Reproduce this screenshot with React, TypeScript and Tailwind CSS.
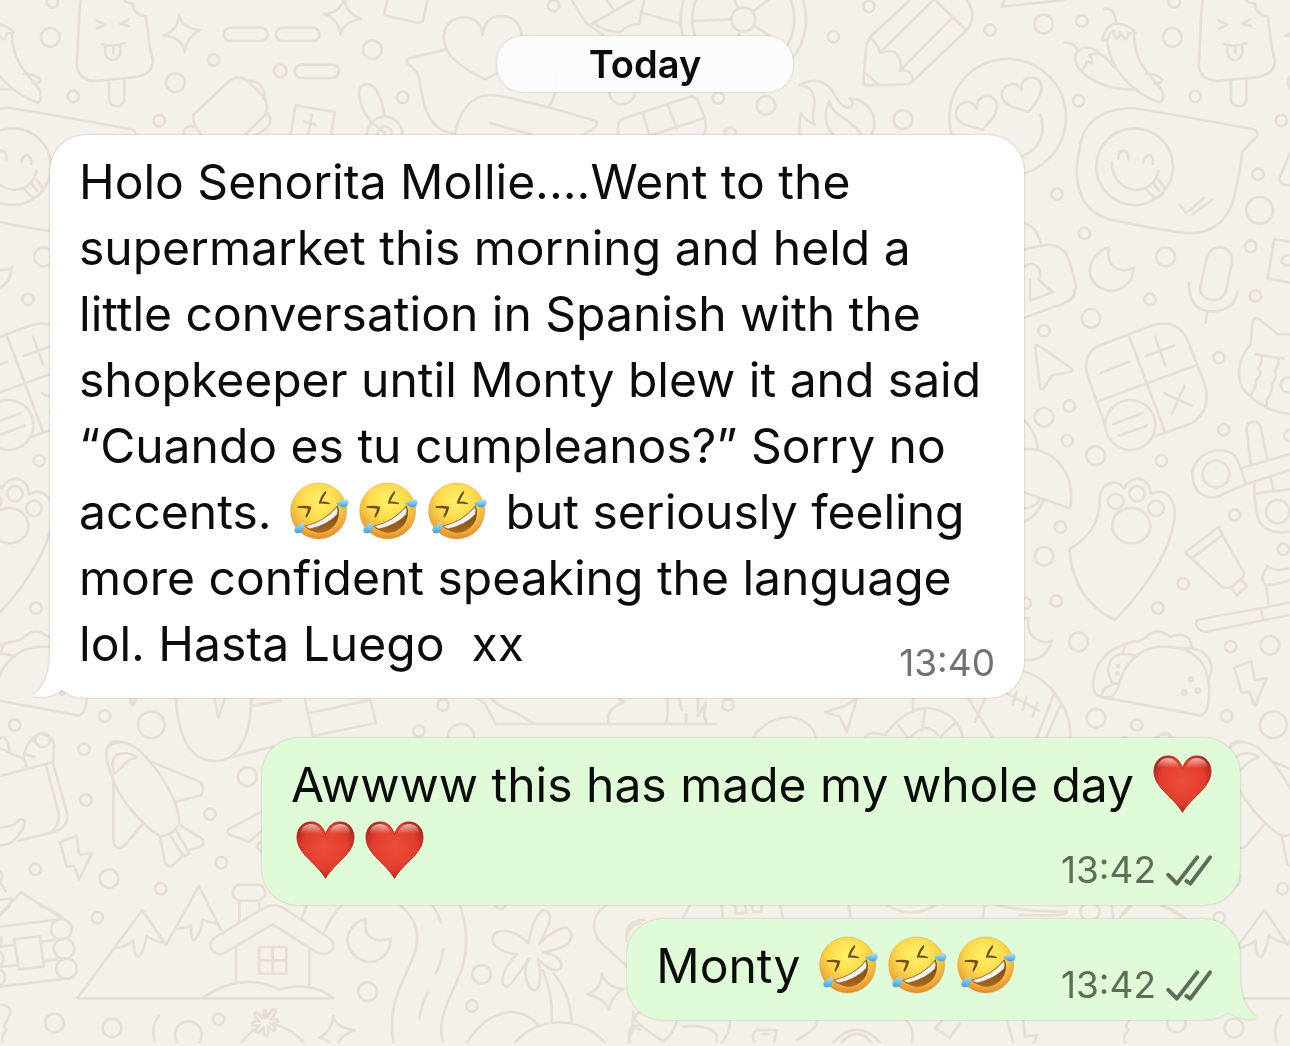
import type { ReactNode } from "react";
import clsx from "clsx";

const FONT = "font-['Inter','Liberation_Sans',sans-serif]";

/** Width after which the wallpaper repeats. */
const TILE = 1122;

type Dot = [number, number, number];

type Doodle = {
  x: number;
  y: number;
  dots: Dot[];
  paths: string[];
};

// Each block is drawn at 3x, from its own origin.
const DOODLES: Doodle[] = [
  {
    x: 0,
    y: 0,
    dots: [
      [157, 6, 17], [151, 112, 28], [220, 289, 17], [478, 362, 17], [526, 248, 28],
      [641, 180, 17], [841, 213, 19], [1117, 149, 28], [1208, 292, 17],
      [1154, 403, 53], [1154, 400, 21],
    ],
    paths: [
      // ice lolly
      "M243 0C235 20 240 50 230 190Q232 240 285 243L400 232Q460 225 458 180C445 130 443 90 437 48Q400 45 398 10Q380 10 372 0",
      "M327 240V300Q330 318 350 319Q370 318 373 300V238M290 62L316 74L290 86M384 58L361 72L387 78",
      "M305 133Q340 142 373 130M316 140V160Q320 180 339 180Q358 178 361 158V138M340 140V158",
      // sparkles and pills
      "M537 45Q545 85 600 90Q560 110 554 155Q545 110 490 107Q535 90 537 45Z",
      "M1032 -5Q1038 40 1084 57Q1030 65 1021 103Q1015 55 972 42Q1020 40 1032 -5Z",
      "M691 83H783a20 20 0 0 1 0 40H691a20 20 0 0 1 0 -40ZM847 83H939a20 20 0 0 1 0 40H847a20 20 0 0 1 0 -40ZM904 194H997a20 20 0 0 1 0 40H904a20 20 0 0 1 0 -40Z",
      "M1163 0L1153 35Q1150 45 1162 48L1250 68Q1265 70 1270 60L1282 0",
      // backpack
      "M580 345L685 245Q715 220 745 245L790 290Q810 315 795 345L735 405M580 345Q575 370 605 405M745 243C780 240 800 270 790 297M550 405C550 380 570 375 582 380M803 340C825 365 800 390 765 405",
      "M872 405L887 316L1004 336L994 405M936 343L925 405M912 365L947 374",
      "M1113 365C1075 320 1065 260 1095 253C1130 245 1150 310 1153 350M1113 365L1155 400",
    ],
  },
  {
    x: 400,
    y: 0,
    dots: [
      [461, 17, 17], [1300, 110, 17], [955, 294, 17], [1098, 316, 28], [991, 400, 17],
      [666, 275, 38], [1030, 58, 36], [1030, 58, 153], [1030, 58, 188],
    ],
    paths: [
      "M248 104C245 60 205 45 170 55C120 75 125 130 150 165C180 200 220 220 257 238C300 215 350 190 365 145C372 85 350 48 305 48C270 48 252 70 248 104Z",
      "M140 148L25 175Q15 180 25 192L52 218C65 260 65 300 80 335C95 375 130 400 165 400",
      "M165 405C175 340 210 285 270 285C310 285 350 300 445 322L580 360Q600 368 585 382L550 405M272 370L400 405M445 322C470 290 475 240 460 200Q430 120 380 110",
      "M515 0Q545 50 560 70L610 105M575 72L700 0M620 0L640 28M580 68Q620 100 665 95Q675 75 717 72L733 0M730 40L840 70",
      "M878 63L994 58M1003 0L1015 25M1060 33L1105 0M1063 78L1110 108M1020 93L1012 120",
      "M655 405Q650 365 665 358L870 290Q885 288 893 300L915 355Q922 385 910 405M728 338L748 405M803 315L830 385M755 405L908 356",
    ],
  },
  {
    x: 820,
    y: 0,
    dots: [
      [147, 19, 17], [510, 90, 17], [671, 72, 28], [786, 63, 17], [249, 359, 28],
      [776, 302, 17], [711, 582, 17], [793, 700, 17], [1037, 771, 28], [1314, 523, 17],
      [1319, 631, 40], [1292, 739, 17], [1306, 888, 17], [990, 898, 17],
      [563, 352, 175], [944, 500, 115],
    ],
    paths: [
      // fire
      "M-60 255C-20 230 20 245 38 275Q60 318 80 323Q102 322 97 305L88 295C140 295 180 350 155 405M-60 255C-20 260 -10 290 -20 330Q-25 360 -15 375Q-45 360 -57 340Q-65 375 -60 405M28 303C10 340 15 380 40 405M28 303C35 350 90 350 125 405",
      // pencil
      "M270 0L150 112Q140 125 138 150L130 245Q130 256 142 256L262 253Q272 250 280 242L440 90Q475 50 440 0M180 158L340 0M240 212L398 52M345 0L434 86",
      "M150 112Q175 135 180 158Q225 145 235 170Q248 190 240 212Q275 205 280 242M132 215L172 252M553 0L545 20L735 0",
      // smiley with heart eyes
      "M470 326C460 295 405 300 408 345C412 375 455 380 488 389C510 365 545 330 525 300C505 275 470 290 470 326ZM605 270C595 240 545 250 545 285C550 320 590 325 625 335C650 310 680 265 655 240C630 222 600 240 605 270ZM661 343C680 400 660 445 608 468",
      // chillies
      "M850 27Q885 20 888 70M847 122Q855 75 890 70Q930 75 947 98L925 100Q925 115 915 118Q905 110 900 95Q900 112 890 116Q880 110 882 92Q865 100 865 118Z",
      "M862 125C870 210 940 280 1020 308Q1035 300 1025 270C1000 230 945 200 942 105M733 128Q760 125 773 150M785 215C755 185 760 145 800 142Q820 142 835 158L808 165Q818 175 816 190L800 185Q795 200 785 215C830 255 880 270 945 268M835 158Q865 175 882 202M978 222C1010 220 1030 235 1025 245Q1015 255 1003 250",
      // winking speech balloon
      "M938 324Q1100 350 1300 388Q1315 392 1312 408L1267 455Q1262 510 1240 600Q1210 700 1105 700Q1020 690 885 662Q770 640 770 510Q775 450 790 400Q830 325 938 324Z",
      "M895 475Q895 452 912 452Q927 455 925 478M971 487Q973 466 987 466Q1002 470 999 492M875 487C880 590 1000 595 1015 512M980 570L1003 592Q1035 590 1033 562L1015 538M1000 550L1018 573M1080 615L1098 640L1152 594M1118 643L1178 598",
      // padlock, moon, microphone
      "M612 668Q650 680 662 730M612 748L675 735Q720 730 740 765Q760 810 767 860Q765 895 745 905M612 800Q640 780 658 808Q665 825 655 838L698 877L630 902V838",
      "M867 742C840 750 800 780 812 830Q830 870 878 873Q935 865 942 803C910 820 855 810 867 742Z",
      "M1160 775Q1170 740 1200 742Q1238 745 1236 785L1220 865Q1212 900 1180 900Q1140 895 1140 865ZM1107 848Q1105 935 1180 935Q1245 930 1252 875M1162 936L1157 968",
      "M1410 725L1362 718L1343 835L1410 848M1410 765Q1385 765 1385 785Q1390 800 1410 795M1410 460L1378 535Q1378 558 1410 555",
    ],
  },
  {
    x: 1010,
    y: 290,
    dots: [
      [243, 85, 28], [102, 122, 17], [627, 203, 17], [178, 348, 17], [102, 382, 28],
      [172, 452, 17], [257, 497, 28], [454, 512, 17], [641, 419, 17], [674, 675, 17],
      [151, 711, 17], [102, 799, 28], [139, 933, 17], [45, 940, 17], [520, 881, 17],
      [444, 954, 17], [206, 1056, 28], [662, 1070, 17], [780, 1066, 28], [650, 1278, 17],
      [790, 1304, 40], [258, 1285, 28], [380, 1305, 17], [820, 778, 17], [840, 437, 17],
      [361, 405, 75], [835, 285, 23], [618, 552, 40], [803, 665, 35], [317, 634, 23],
      [381, 611, 23], [438, 655, 23], [464, 1350, 22],
      [543, 1168, 6], [523, 1208, 6], [563, 1202, 6], [325, 1128, 3], [322, 1150, 3],
    ],
    paths: [
      "M45 82L150 45Q200 25 193 0M75 170Q75 162 90 170L185 235Q192 243 180 246L128 255Q110 280 100 297Q92 300 90 290Z",
      // calculator
      "M265 168L430 105Q505 85 535 155L585 285Q605 360 545 400L430 440M265 168Q215 195 232 255L285 405M357 138L465 425M265 333L555 227M273 248L358 215M408 198L492 167M435 140L465 224M463 310L545 347M524 288L486 370M310 402L397 370M324 438L410 407",
      // crying cat
      "M840 133L803 132L745 86Q730 82 728 95L722 162C670 225 680 290 722 320Q770 365 840 372M738 193L820 206M755 198Q758 215 745 235Q760 250 738 270Q740 290 722 315M805 207Q808 225 795 240Q802 262 785 285Q790 305 770 330V350",
      // scissors
      "M722 520L710 420Q708 397 730 395Q748 395 752 412L772 508M705 585Q660 600 630 618C570 635 545 590 547 545C560 480 650 460 680 505Q690 525 708 585M692 535L840 492M708 583L840 540M733 580V610Q737 680 755 705Q785 735 840 725M733 610L840 598M782 565L790 600",
      "M42 390Q80 430 83 475M42 478C130 470 200 550 180 655L42 607M102 628Q80 680 42 695M92 625Q75 655 42 655",
      // paw
      "M178 778C260 730 270 670 270 620C275 575 320 565 342 595C360 555 420 555 422 612C470 590 500 630 493 690C480 780 420 880 315 990Q190 930 178 778ZM307 707A57 53 0 0 1 421 707A57 53 0 0 1 307 707Z",
      // tube and toothbrush
      "M525 788L627 710L637 735L700 845Q705 860 692 868L665 892Q650 897 635 890L545 805ZM545 805L635 737M692 868L711 888L680 916L663 893",
      "M840 938L575 987Q555 990 558 1005Q568 1028 590 1025L840 975M752 955L760 988M775 940L768 885Q745 870 773 828Q785 845 840 835M768 885Q800 885 840 870",
      "M60 985H45M55 985C45 1040 90 1065 125 1052Q110 1115 42 1110",
      // taco
      "M280 1222L570 1276Q590 1275 595 1240C610 1130 560 1070 465 1070C390 1068 340 1120 325 1190Q315 1225 280 1222C235 1220 245 1150 275 1110Q305 1070 370 1055Q395 1055 410 1040Q440 1010 480 1040Q540 1020 545 1072M520 1075C590 1070 620 1120 597 1165M375 1097Q300 1075 295 1140Q298 1170 312 1182M275 1215Q280 1185 325 1180M340 1085L347 1063",
      "M673 1133L724 1114L734 1170L770 1165L735 1246L718 1205L695 1208Z",
      // rugby ball
      "M42 1145Q110 1160 160 1250Q185 1300 180 1345M130 1217L80 1345M150 1247L108 1345M-10 1210L88 1262M20 1205L8 1245M50 1220L38 1260M82 1238L68 1278",
    ],
  },
  {
    x: 0,
    y: 690,
    dots: [
      [252, 178, 17], [258, 330, 17], [742, 260, 28], [630, 372, 17], [664, 518, 17],
      [482, 596, 17], [106, 538, 17], [327, 566, 28], [292, 683, 17], [163, 999, 28],
      [336, 1014, 28], [565, 1034, 40], [656, 988, 17],
      [184, 718, 31], [192, 776, 31], [200, 836, 31],
    ],
    paths: [
      "M0 258L158 217L200 365Q210 410 165 425L55 452M138 225L175 365Q182 400 155 425M70 205Q80 150 115 133Q155 130 162 165L160 215M70 205Q78 215 80 232M0 175Q30 190 68 205M95 150L117 165M75 192L103 200M0 145Q20 130 28 180M0 413Q40 410 60 388Q80 385 72 410Q40 470 0 465",
      // rocket
      "M335 255C315 210 310 165 340 155C400 150 430 190 470 240C520 310 540 360 537 405Q510 440 480 438C430 410 350 320 335 255ZM345 250C330 225 335 190 370 190Q395 188 410 203C375 210 365 235 345 250ZM322 175Q340 155 362 158M445 212L600 275Q615 290 605 315L525 335M340 270V460Q355 485 375 465L425 405",
      "M480 440L495 520Q510 540 530 515L545 500M508 432L545 490Q555 505 567 488L528 420M540 405L608 448Q615 465 600 470L567 480",
      "M180 457L230 437L238 493L275 490L238 568L222 528L200 530Z",
      "M527 25C530 80 545 210 640 213C730 215 750 120 755 25M643 25L655 82L675 25M700 200L820 170M757 48L840 32M390 25Q390 45 398 45Q408 40 408 25",
      "M800 356L685 418Q680 430 690 435L748 455L800 410M780 455L770 470L790 492",
      // log cabin
      "M0 672L63 607L190 687L0 710M35 625L0 630M0 770L45 764M0 830L52 826M125 755L162 750M130 815L170 808M0 890L205 865M42 748L120 738L131 830L57 838ZM0 740Q10 745 0 765M0 785Q20 805 0 830M0 838Q30 860 0 888M0 545Q15 555 0 575L18 605",
      // mountains
      "M1000 925H232L427 660L498 765L597 588L663 720M345 773Q380 770 400 752L402 780Q410 810 422 795Q435 770 440 738Q465 755 490 758M530 717Q560 712 573 707Q572 755 585 750Q605 725 608 688Q625 698 655 700M610 922C700 860 780 870 838 898C900 880 960 890 1000 925",
      // house
      "M722 584H771a24 24 0 0 1 0 48H722a24 24 0 0 1 0 -48ZM718 632V692M778 632V660M790 655L645 742Q620 760 640 785Q660 800 680 785L818 703L950 787Q985 800 998 775Q1005 755 985 742L860 660Q825 635 790 655M708 768V878M928 775V885M777 771H859V851H777ZM818 771V851M777 811H859",
      "M477 977Q450 1010 465 1057M725 1057Q745 1030 770 1015M830 1005Q880 1020 910 1057",
      "M795 985Q785 955 798 962Q800 975 802 985Q815 950 825 960Q830 968 812 988Q840 985 833 996Q825 1002 812 1000Q835 1020 822 1022Q812 1020 804 1010Q808 1040 795 1036Q788 1030 792 1012Q775 1035 768 1026Q765 1018 780 1005Q750 1010 757 998Q765 990 778 994Q755 970 768 968Q780 972 785 984Q788 975 795 985Z",
      "M0 945Q35 945 30 970L22 990Q5 1010 20 1020Q0 1040 10 1057",
    ],
  },
  {
    x: 270,
    y: 895,
    dots: [[293, 290, 28], [635, 238, 28], [606, 333, 17]],
    paths: [
      "M288 72C250 80 220 120 238 160Q265 205 315 200Q360 180 362 130C320 145 275 130 288 72Z",
      // road
      "M390 30Q460 90 435 170C410 250 350 310 370 443M570 30C600 120 590 200 560 260C530 330 500 380 520 443M487 30Q505 55 513 82M520 163Q515 200 497 235M472 293Q455 330 448 368",
      "M190 363Q198 400 255 405Q215 420 205 443M190 363Q185 410 147 428Q165 430 180 443M110 30L95 70M215 30Q185 60 163 110",
      // palm tree
      "M775 145Q790 60 820 45Q850 50 835 90Q820 125 807 148Q850 100 890 98Q915 115 895 145Q865 165 818 172Q870 180 875 210Q865 240 830 215L803 192Q815 230 808 270Q795 300 775 270Q755 230 778 190Q750 230 725 265Q705 285 697 260Q700 215 742 178Q680 170 668 140Q665 100 720 110Q755 120 775 145ZM818 225Q850 300 845 380M850 235Q900 290 905 385M590 443C650 350 740 320 805 390M735 443C800 365 930 360 1005 443",
      "M996 235Q1005 275 1060 282Q1025 300 1017 345Q1005 310 952 298Q995 280 996 235Z",
      "M1010 30Q950 70 985 135L1070 213M1070 140Q1065 95 1110 85M675 30Q692 55 708 30M1110 350Q1080 370 1090 390Q1070 410 1080 443M1090 390L1110 405",
    ],
  },
  {
    x: 250,
    y: 690,
    dots: [[579, 45, 17], [507, 123, 17], [633, 141, 39], [1434, 45, 17]],
    paths: [
      "M165 30L189 138L378 99L360 27M180 69L360 30",
      "M681 24L705 42L738 102H1398M723 24Q750 54 795 66Q834 90 855 102M1104 24L1122 36Q1062 60 1077 102M1251 24Q1257 60 1248 102M1287 24L1296 60M1308 72V102M1344 24V78L1368 36L1362 78L1371 102",
      "M1509 144Q1545 84 1620 81Q1686 90 1698 144M1785 48L1725 66L1770 81L1791 126L1821 24Z",
      "M1989 24V66M1845 144Q1854 120 1905 135Q1965 54 2034 54Q2124 66 2139 144M1944 105L1974 144M2025 60L2016 120M2115 99L2073 138M1980 144Q2025 90 2064 135M2154 24L2229 144M2175 96L2205 24",
    ],
  },
  {
    x: 620,
    y: 900,
    dots: [[1410, 35, 28]],
    paths: [
      "M40 335Q35 360 80 390L130 425Q160 400 170 365M25 428Q35 380 55 375M290 428Q300 370 190 380M330 365Q330 400 305 428M470 390H410Q390 405 405 428M470 390L462 428M425 402H445M530 420Q590 390 592 362M640 428Q710 350 780 428M665 428Q710 375 755 428M860 362Q885 390 875 428M965 362L945 385L990 412L1020 370M1160 362L1180 428M1210 362L1215 410L1250 405Q1245 425 1240 428",
      "M210 15L190 50M305 15L308 50M345 15L348 40L380 38L375 15M395 15L400 35H425V15M480 15L488 50M685 15L692 50M800 15Q870 60 950 15M1095 15L1088 50M1130 15Q1200 35 1340 35Q1350 50 1200 45M20 110Q15 60 75 60M1475 15L1480 52M1500 52L1535 18M1625 18Q1680 35 1695 55",
    ],
  },
];

function Wallpaper() {
  return (
    <div className="absolute inset-x-0 top-0 bottom-[3px] overflow-hidden" aria-hidden="true">
      <svg className="size-full" fill="none" stroke="#e7dfd3" strokeWidth="8" strokeLinecap="round" strokeLinejoin="round">
        <defs>
          <g id="doodles">
            {DOODLES.map((d) => (
              <g key={`${d.x}-${d.y}`} transform={`translate(${d.x} ${d.y}) scale(0.33333)`}>
                {d.dots.map(([cx, cy, r]) => (
                  <circle key={`${cx}-${cy}-${r}`} cx={cx} cy={cy} r={r} />
                ))}
                {d.paths.map((p) => (
                  <path key={p} d={p} />
                ))}
              </g>
            ))}
          </g>
        </defs>
        <use href="#doodles" x={-TILE} />
        <use href="#doodles" />
        <use href="#doodles" x={TILE} />
      </svg>
    </div>
  );
}

/** Gradients shared by every emoji on the page. */
function EmojiPaints() {
  return (
    <svg className="absolute size-0" aria-hidden="true">
      <defs>
        <radialGradient id="face" cx="0.5" cy="0.32" r="0.7">
          <stop offset="0" stopColor="#fff36b" />
          <stop offset="0.5" stopColor="#fbd94a" />
          <stop offset="0.8" stopColor="#f2ac3b" />
          <stop offset="1" stopColor="#d98526" />
        </radialGradient>
        <linearGradient id="tear" x1="0" y1="0" x2="0" y2="1">
          <stop offset="0" stopColor="#b5e6fb" />
          <stop offset="1" stopColor="#3d9fe0" />
        </linearGradient>
        <linearGradient id="grin" x1="0" y1="0" x2="0" y2="1">
          <stop offset="0" stopColor="#6d3f10" />
          <stop offset="1" stopColor="#a8691f" />
        </linearGradient>
        <radialGradient id="heart" cx="0.5" cy="0.45" r="0.6">
          <stop offset="0" stopColor="#ec4f3c" />
          <stop offset="0.65" stopColor="#e33d2d" />
          <stop offset="1" stopColor="#a81f1a" />
        </radialGradient>
        <linearGradient id="shine" x1="0" y1="0" x2="0" y2="1">
          <stop offset="0" stopColor="#ffffff" stopOpacity="0.65" />
          <stop offset="0.7" stopColor="#ffffff" stopOpacity="0" />
        </linearGradient>
      </defs>
    </svg>
  );
}

function Rofl() {
  return (
    <svg viewBox="62 37 177 174" className="mx-[5px] inline-block h-[58px] w-[59px] align-[-11px]" role="img" aria-label="🤣">
      <circle cx="148" cy="124" r="84" fill="url(#face)" stroke="#d98a2b" strokeOpacity="0.6" strokeWidth="2" />
      <path d="M86 110Q106 106 126 111Q124 128 112 144Q107 144 109 137Q115 127 116 117Q102 114 87 115Q82 112 86 110Z" fill="#7a4a12" />
      <path d="M168 64Q173 66 170 71Q161 84 156 96Q169 95 181 100Q185 103 180 104Q163 101 148 102Q153 80 168 64Z" fill="#7a4a12" />
      <path d="M105 170Q165 157 205 107Q216 140 196 167Q175 191 145 189Q120 185 105 170Z" fill="url(#grin)" />
      <path d="M108 169Q165 156 203 111Q208 124 204 134Q176 166 122 178Q112 175 108 169Z" fill="#f4f3f1" stroke="#8a5518" strokeWidth="2" />
      <path d="M199 99Q213 98 222 90Q234 84 238 98Q236 114 221 113Q211 112 199 99Z" fill="url(#tear)" />
      <path d="M101 156Q105 172 101 182Q93 194 80 190Q70 183 79 171Q90 166 101 156Z" fill="url(#tear)" />
    </svg>
  );
}

function Heart() {
  return (
    <svg viewBox="47 244 176 175" className="mx-[5px] inline-block h-[58px] w-[59px] align-[-11px]" role="img" aria-label="❤️">
      <path
        d="M135 284C125 256 110 247 91 247C65 247 49 268 49 294C51 345 108 370 135 417C162 370 219 345 221 294C221 268 205 247 179 247C160 247 145 256 135 284Z"
        fill="url(#heart)"
        stroke="#b3261d"
        strokeWidth="3"
      />
      <path d="M58 286C60 264 74 253 91 253C108 253 119 263 126 284C105 300 75 300 58 286ZM144 284C151 263 162 253 179 253C196 253 210 264 212 286C195 300 165 300 144 284Z" fill="url(#shine)" />
    </svg>
  );
}

function DoubleTick() {
  return (
    <svg viewBox="0 0 140 94" className="h-[31px] w-[46px]" fill="none" stroke="currentColor" strokeWidth="12" strokeLinecap="round" strokeLinejoin="round" role="img" aria-label="Delivered">
      <path d="M7 60L33 87L95 7M62 79L74 87L134 7" />
    </svg>
  );
}

function Tail({ sent }: { sent: boolean }) {
  return (
    <svg
      viewBox="0 0 48 48"
      className={clsx("absolute bottom-0 size-12", sent ? "-right-[18px] -scale-x-100 text-[#dffbd7]" : "-left-[18px] text-white")}
      fill="currentColor"
      aria-hidden="true"
    >
      <path d="M18 0C18 22 14 36 0 46Q16 50 30 40Q36 45 48 48V0Z" />
    </svg>
  );
}

function Stamp({ time, sent = false, className }: { time: string; sent?: boolean; className?: string }) {
  return (
    <span className={clsx("flex items-center gap-2.5 text-[37px]/9", sent ? "text-[#5d6d59]" : "text-[#717171]", className)}>
      <time>{time}</time>
      {sent && <DoubleTick />}
    </span>
  );
}

function Bubble({
  sent = false,
  tail = false,
  className,
  children,
}: {
  sent?: boolean;
  tail?: boolean;
  className?: string;
  children: ReactNode;
}) {
  return (
    <li
      className={clsx(
        "relative rounded-[36px] pt-3.5 pb-[21px] pl-[29px] text-5xl/[66px] text-[#0b0c0b] drop-shadow-[0_0_1px_rgba(80,60,40,0.3)]",
        sent ? "self-end bg-[#dffbd7]" : "self-start bg-white",
        className,
      )}
    >
      {tail && <Tail sent={sent} />}
      {children}
    </li>
  );
}

export default function App() {
  return (
    <main className={clsx("relative min-h-screen overflow-hidden bg-[#f4f0ea] pt-9 pb-6", FONT)}>
      <Wallpaper />
      <EmojiPaints />

      <div className="relative flex flex-col">
        <h2 className="min-w-[296px] self-center rounded-[26px] bg-white/95 text-center text-[38px]/[56px] font-semibold text-[#0b0c0b] drop-shadow-[0_0_1px_rgba(80,60,40,0.3)]">
          Today
        </h2>

        <ol className="mt-[43px] flex flex-col px-[50px]">
          <Bubble tail className="w-full max-w-[974px] pr-[29px]">
            <p className="relative whitespace-pre-wrap">
              Holo Senorita Mollie....Went to the{"\n"}
              supermarket this morning and held a{"\n"}
              little conversation in Spanish with the{"\n"}
              shopkeeper until Monty blew it and said{"\n"}
              “Cuando es tu cumpleanos?” Sorry no{"\n"}
              accents. <Rofl /><Rofl /><Rofl /> but seriously feeling{"\n"}
              more confident speaking the language{"\n"}
              lol. Hasta Luego{"  "}xx
            </p>
            <Stamp time="13:40" className="absolute right-[29px] bottom-[17px]" />
          </Bubble>

          <Bubble sent className="mt-10 w-full max-w-[978px] pr-5">
            <p>
              Awwww this has made my whole day <Heart />
              <br />
              <Heart />
              <Heart />
            </p>
            <Stamp time="13:42" sent className="absolute right-7 bottom-[17px]" />
          </Bubble>

          <Bubble sent tail className="mt-3.5 flex items-end gap-10 pr-7">
            <p className="relative">
              Monty <Rofl /><Rofl /><Rofl />
            </p>
            <Stamp time="13:42" sent className="relative -mb-1" />
          </Bubble>
        </ol>
      </div>
    </main>
  );
}
